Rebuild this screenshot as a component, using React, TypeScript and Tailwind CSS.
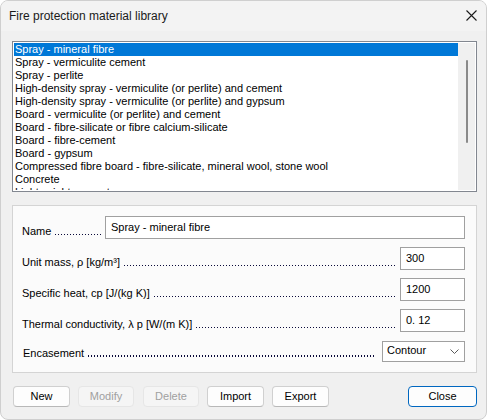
import React from "react";

const items = [
  "Spray - mineral fibre",
  "Spray - vermiculite cement",
  "Spray - perlite",
  "High-density spray - vermiculite (or perlite) and cement",
  "High-density spray - vermiculite (or perlite) and gypsum",
  "Board - vermiculite (or perlite) and cement",
  "Board - fibre-silicate or fibre calcium-silicate",
  "Board - fibre-cement",
  "Board - gypsum",
  "Compressed fibre board - fibre-silicate, mineral wool, stone wool",
  "Concrete",
  "Lightweight concrete",
];

function Leader({ label }: { label: string }) {
  return (
    <div className="flex flex-1 min-w-0 items-end whitespace-nowrap text-[11px] leading-[14px] text-black">
      <span className="pr-[4px]">{label}</span>
      <span className="flex-1 min-w-0 h-[1.5px] mb-[3px] bg-[linear-gradient(to_right,#0a0a3a_1.4px,transparent_1.4px)] bg-[length:3px_2px] bg-repeat-x" />
    </div>
  );
}

function Btn({ label, disabled, primary, className = "" }: { label: string; disabled?: boolean; primary?: boolean; className?: string }) {
  const base = "h-[21px] rounded-[4px] border flex items-center justify-center text-[11px] shrink-0 ";
  const style = primary
    ? "border-[#0067c0] bg-[#fdfdfd] text-black"
    : disabled
    ? "border-[#e6e6e6] bg-[#f5f5f5] text-[#a0a0a0]"
    : "border-[#d0d0d0] border-b-[#b8b8b8] bg-[#fdfdfd] text-black";
  return <div className={base + style + " " + className}>{label}</div>;
}

export default function App() {
  return (
    <div className="w-[487px] h-[420px] bg-white" style={{ fontFamily: '"Liberation Sans", Arial, sans-serif' }}>
      <div className="w-[487px] h-[420px] rounded-[8px] border border-[#cfcfcf] bg-[#f0f0f0] overflow-hidden flex flex-col">
        {/* title bar */}
        <div className="h-[30px] bg-[#f3f3f3] flex items-center justify-between pl-[8px] pr-[9px] shrink-0">
          <span className="text-[12px] text-[#1a1a1a] leading-none">Fire protection material library</span>
          <svg width="11" height="11" viewBox="0 0 11 11" className="mb-[1px]">
            <path d="M0.5 0.5 L10.5 10.5 M10.5 0.5 L0.5 10.5" stroke="#1a1a1a" strokeWidth="1.1" />
          </svg>
        </div>

        <div className="flex flex-col pl-[11px] pr-[9px]">
          {/* list box */}
          <div className="mt-[10px] h-[151px] border border-[#828790] bg-white p-[1px] flex">
            <div className="flex-1 min-w-0 overflow-hidden">
              {items.map((it, i) => (
                <div
                  key={it}
                  className={
                    "h-[13px] leading-[13px] text-[11px] pl-[1px] whitespace-nowrap " +
                    (i === 0 ? "bg-[#0078d7] text-white" : "text-black")
                  }
                >
                  {it}
                </div>
              ))}
            </div>
            <div className="w-[17px] bg-[#f0f0f0] flex justify-center pt-[17px] shrink-0">
              <div className="w-[2px] h-[83px] rounded-full bg-[#8a8a8a]" />
            </div>
          </div>

          {/* group box */}
          <div className="mt-[13px] h-[168px] border border-[#d4d4d4] bg-[#fbfbfb] pl-[9px] pr-[11px] pt-[10px] flex flex-col">
            <div className="flex items-center h-[23px]">
              <div className="w-[83px] shrink-0 mt-[7px] pr-[4px] flex">
                <Leader label="Name" />
              </div>
              <div className="flex-1 min-w-0 h-[23px] border border-[#a0a0a0] bg-white pl-[5px] pt-[3px] text-[11px] leading-[14px] text-black">
                Spray - mineral fibre
              </div>
            </div>
            {[
              ["Unit mass, ρ [kg/m³]", "300"],
              ["Specific heat, cp [J/(kg K)]", "1200"],
              ["Thermal conductivity, λ p [W/(m K)]", "0. 12"],
            ].map(([l, v]) => (
              <div key={l} className="flex items-center h-[23px] mt-[8px]">
                <div className="flex-1 min-w-0 mt-[7px] pr-[5px] flex">
                  <Leader label={l} />
                </div>
                <div className="w-[65px] shrink-0 h-[23px] border border-[#a0a0a0] bg-white pl-[5px] pt-[4px] text-[11px] leading-[13px] text-black whitespace-pre">
                  {v}
                </div>
              </div>
            ))}
            <div className="flex items-center h-[21px] mt-[9px]">
              <div className="flex-1 min-w-0 mt-[2px] pl-[1px] pr-[6px] flex">
                <Leader label="Encasement" />
              </div>
              <div className="w-[83px] shrink-0 h-[21px] border border-[#a0a0a0] bg-white pl-[4px] pr-[5px] flex items-center justify-between text-[11px] text-black">
                <span className="leading-none mb-[2px]">Contour</span>
                <svg width="9" height="5" viewBox="0 0 9 5">
                  <path d="M0.5 0.5 L4.5 4.5 L8.5 0.5" stroke="#5a5a5a" strokeWidth="1" fill="none" />
                </svg>
              </div>
            </div>
          </div>

          {/* buttons */}
          <div className="mt-[13px] flex items-center">
            <Btn label="New" className="w-[57px] ml-[1px]" />
            <Btn label="Modify" disabled className="w-[56px] ml-[8px]" />
            <Btn label="Delete" disabled className="w-[56px] ml-[9px]" />
            <Btn label="Import" className="w-[57px] ml-[8px]" />
            <Btn label="Export" className="w-[57px] ml-[8px]" />
            <Btn label="Close" primary className="w-[69px] ml-auto" />
          </div>
        </div>
      </div>
    </div>
  );
}
